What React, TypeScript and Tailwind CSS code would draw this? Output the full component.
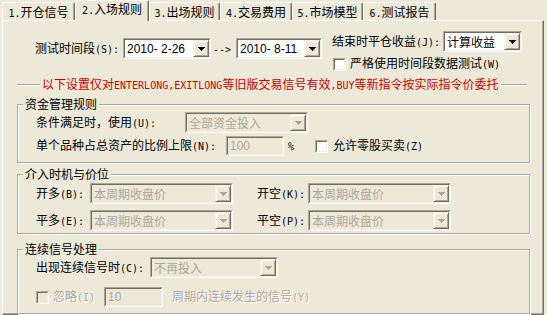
import React from "react";

const tabs = ["开仓信号", "入场规则", "出场规则", "交易费用", "市场模型", "测试报告"];
const tabWidths = ["w-[73px]", "w-[74px]", "w-[71px]", "w-[72px]", "w-[71px]", "w-[73px]"];

// SimSun-like half width latin run (6px per char)
function L({ children }: { children: React.ReactNode }) {
  return <span className="font-['DejaVu_Sans_Mono',monospace] text-[10px]">{children}</span>;
}

function Arrow({ disabled }: { disabled?: boolean }) {
  return (
    <svg width="7" height="4" viewBox="0 0 7 4" className="block">
      <path d="M0 0h7v1h-1v1h-1v1h-1v1h-1v-1h-1v-1h-1v-1h-1z" fill={disabled ? "#ACA899" : "#000000"} />
    </svg>
  );
}

function Sunken({
  className,
  disabled,
  children,
}: {
  className: string;
  disabled?: boolean;
  children?: React.ReactNode;
}) {
  return (
    <div className={`shrink-0 border border-t-[#ACA899] border-l-[#ACA899] border-r-white border-b-white ${className}`}>
      <div
        className={`flex h-full items-center border border-t-[#716F64] border-l-[#716F64] border-r-[#F1EFE2] border-b-[#F1EFE2] ${
          disabled ? "bg-[#ECE9D8]" : "bg-white"
        }`}
      >
        {children}
      </div>
    </div>
  );
}

function Combo({
  w,
  value,
  disabled,
  latin,
}: {
  w: string;
  value: string;
  disabled?: boolean;
  latin?: boolean;
}) {
  return (
    <Sunken className={`h-[21px] ${w}`} disabled={disabled}>
      <span
        className={`flex-1 whitespace-pre pl-[2px] ${latin ? "font-['Liberation_Sans',sans-serif]" : ""} ${
          disabled ? "text-[#ACA899]" : "text-black"
        }`}
      >
        {value}
      </span>
      <div className="flex h-full w-[16px] shrink-0 items-center justify-center border border-t-[#F1EFE2] border-l-[#F1EFE2] border-r-[#716F64] border-b-[#716F64] bg-[#ECE9D8] shadow-[inset_1px_1px_0_#ffffff,inset_-1px_-1px_0_#ACA899]">
        <Arrow disabled={disabled} />
      </div>
    </Sunken>
  );
}

function Check({ disabled }: { disabled?: boolean }) {
  return <Sunken className="h-[13px] w-[13px]" disabled={disabled} />;
}

function Group({
  title,
  className,
  children,
}: {
  title: string;
  className: string;
  children: React.ReactNode;
}) {
  return (
    <div
      className={`ml-[14px] w-[513px] border border-[#ACA899] shadow-[inset_1px_1px_0_#ffffff,1px_1px_0_#ffffff] ${className}`}
    >
      <div className="-mt-[8px] ml-[5px] h-[14px] w-fit bg-[#ECE9D8] px-[2px]">{title}</div>
      {children}
    </div>
  );
}

export default function App() {
  return (
    <div className="h-[315px] w-[547px] overflow-hidden bg-[#ECE9D8] font-['Noto_Sans_CJK_SC',sans-serif] text-[12px] leading-[14px] text-black">
      {/* tab strip */}
      <div className="flex h-[20px] items-end pl-[2px]">
        {tabs.map((t, i) =>
          i === 1 ? (
            <div
              key={t}
              className={`relative z-10 -mb-px h-[21px] rounded-t-[2px] border-t border-l border-r border-t-white border-l-white border-r-[#716F64] bg-[#ECE9D8] text-center leading-[16px] shadow-[inset_-1px_0_0_#ACA899] ${tabWidths[i]}`}
            >
              <L>{i + 1}.</L>
              {t}
            </div>
          ) : (
            <div
              key={t}
              className={`h-[18px] rounded-t-[2px] border-t border-l border-r border-t-white border-l-white border-r-[#716F64] pt-[1px] text-center leading-[16px] shadow-[inset_-1px_0_0_#ACA899] ${tabWidths[i]}`}
            >
              <L>{i + 1}.</L>
              {t}
            </div>
          )
        )}
      </div>

      {/* page */}
      <div className="ml-[2px] h-[295px] w-[542px] border border-t-white border-l-white border-r-[#716F64] border-b-[#716F64] shadow-[inset_-1px_-1px_0_#ACA899]">
        <div className="mt-[10px] flex items-start">
          <div className="mt-[7px] flex items-center pl-[32px]">
            <span className="w-[88px]">
              测试时间段<L>(S):</L>
            </span>
            <Combo w="w-[88px]" value="2010- 2-26" latin />
            <span className="w-[25px] pl-[2px]">
              <L>--&gt;</L>
            </span>
            <Combo w="w-[86px]" value="2010- 8-11" latin />
          </div>
          <div className="flex flex-col pl-[10px]">
            <div className="flex items-center">
              <span className="w-[111px]">
                结束时平仓收益<L>(J):</L>
              </span>
              <Combo w="w-[79px]" value="计算收益" />
            </div>
            <div className="mt-[4px] flex items-center pl-[1px]">
              <Check />
              <span className="ml-[4px]">
                严格使用时间段数据测试<L>(W)</L>
              </span>
            </div>
          </div>
        </div>

        <div className="mt-[5px] ml-[14px] flex w-[510px] items-center">
          <div className="w-[23px] border-t border-b border-t-[#ACA899] border-b-white" />
          <span className="mx-[2px] text-[#D00000]">
            以下设置仅对<L>ENTERLONG,EXITLONG</L>等旧版交易信号有效<L>,BUY</L>等新指令按实际指令价委托
          </span>
          <div className="flex-1 border-t border-b border-t-[#ACA899] border-b-white" />
        </div>

        <Group title="资金管理规则" className="mt-[11px] h-[59px]">
          <div className="mt-[1px] flex items-center pl-[18px]">
            <span className="w-[149px]">
              条件满足时，使用<L>(U):</L>
            </span>
            <Combo w="w-[123px]" value="全部资金投入" disabled />
          </div>
          <div className="mt-[3px] flex items-center pl-[18px]">
            <span className="w-[190px]">
              单个品种占总资产的比例上限<L>(N):</L>
            </span>
            <Sunken className="h-[20px] w-[58px]" disabled>
              <span className="pl-[2px] font-['Liberation_Sans',sans-serif] text-[#ACA899]">100</span>
            </Sunken>
            <span className="ml-[4px] w-[27px]">
              <L>%</L>
            </span>
            <Check />
            <span className="ml-[5px]">
              允许零股买卖<L>(Z)</L>
            </span>
          </div>
        </Group>

        <Group title="介入时机与价位" className="mt-[11px] h-[60px]">
          <div className="mt-[2px] flex items-center pl-[18px]">
            <span className="w-[54px]">
              开多<L>(B):</L>
            </span>
            <Combo w="w-[143px]" value="本周期收盘价" disabled />
            <span className="ml-[24px] w-[51px]">
              开空<L>(K):</L>
            </span>
            <Combo w="w-[143px]" value="本周期收盘价" disabled />
          </div>
          <div className="mt-[6px] flex items-center pl-[18px]">
            <span className="w-[54px]">
              平多<L>(E):</L>
            </span>
            <Combo w="w-[143px]" value="本周期收盘价" disabled />
            <span className="ml-[24px] w-[51px]">
              平空<L>(P):</L>
            </span>
            <Combo w="w-[143px]" value="本周期收盘价" disabled />
          </div>
        </Group>

        <Group title="连续信号处理" className="mt-[15px] h-[65px]">
          <div className="mt-[1px] flex items-center pl-[18px]">
            <span className="w-[114px]">
              出现连续信号时<L>(C):</L>
            </span>
            <Combo w="w-[128px]" value="不再投入" disabled />
          </div>
          <div className="mt-[9px] flex items-center pl-[18px]">
            <Check disabled />
            <span className="ml-[4px] w-[51px] text-[#ACA899] [text-shadow:1px_1px_0_#ffffff]">
              忽略<L>(I)</L>
            </span>
            <Sunken className="h-[20px] w-[59px]" disabled>
              <span className="pl-[2px] font-['Liberation_Sans',sans-serif] text-[#ACA899]">10</span>
            </Sunken>
            <span className="ml-[9px] text-[#ACA899] [text-shadow:1px_1px_0_#ffffff]">
              周期内连续发生的信号<L>(Y)</L>
            </span>
          </div>
        </Group>
      </div>
    </div>
  );
}
